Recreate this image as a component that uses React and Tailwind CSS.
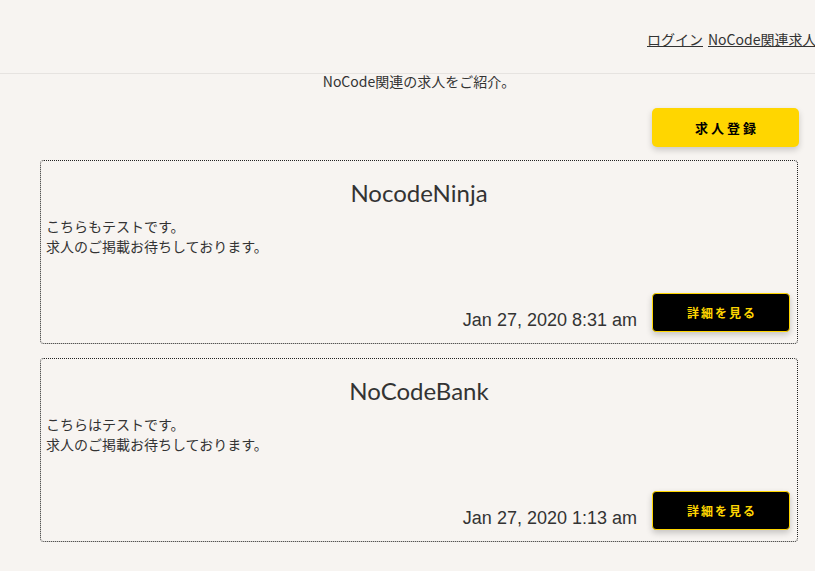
import React from "react";

const jobs = [
  {
    name: "NocodeNinja",
    lines: ["こちらもテストです。", "求人のご掲載お待ちしております。"],
    date: "Jan 27, 2020 8:31 am",
  },
  {
    name: "NoCodeBank",
    lines: ["こちらはテストです。", "求人のご掲載お待ちしております。"],
    date: "Jan 27, 2020 1:13 am",
  },
];

const jp = { fontFamily: '"Noto Sans CJK JP", "Noto Sans", sans-serif' };

function JobCard({ job }) {
  return (
    <div className="flex h-[184px] flex-col rounded-[4px] border border-dotted border-[#222]">
      <div
        className="pt-[17px] text-center text-[24px] leading-[30px] text-[#333]"
        style={{ fontFamily: "Lato, sans-serif" }}
      >
        {job.name}
      </div>
      <div className="mt-[8px] pl-[5px] text-[14px] leading-[20px] text-[#333]" style={jp}>
        {job.lines.map((l, i) => (
          <div key={i}>{l}</div>
        ))}
      </div>
      <div className="mt-auto mb-[11px] flex items-center justify-end pr-[7px]">
        <span
          className="mr-[15px] mt-[14px] text-[18px] leading-[20px] text-[#333]"
          style={{ fontFamily: '"Liberation Sans", Arial, sans-serif' }}
        >
          {job.date}
        </span>
        <button
          className="flex h-[39px] w-[138px] items-center justify-center rounded-[4px] border border-[#ffd600] bg-black pl-[2px] text-[12px] font-bold tracking-[2px] text-[#ffd600] shadow-[0_3px_6px_rgba(0,0,0,0.2)]"
          style={jp}
        >
          詳細を見る
        </button>
      </div>
    </div>
  );
}

export default function App() {
  return (
    <div className="h-[571px] w-[815px] overflow-hidden bg-[#f7f4f1]">
      <header className="h-[74px] border-b border-[#e6e3e0]">
        <nav
          className="flex gap-[5px] whitespace-nowrap pl-[647px] pt-[29px] text-[14px] leading-[20px] text-[#333]"
          style={jp}
        >
          <a className="underline" href="#">ログイン</a>
          <a className="underline" href="#">NoCode関連求人</a>
        </nav>
      </header>
      <main className="ml-[40px] w-[758px]">
        <p className="text-center text-[14px] leading-[14px] text-[#333]" style={jp}>
          NoCode関連の求人をご紹介。
        </p>
        <div className="mt-[20px] flex justify-end">
          <button
            className="-mr-[1px] flex h-[39px] w-[147px] items-center justify-center rounded-[5px] bg-[#ffd600] pl-[3px] text-[13px] font-bold tracking-[3px] text-black shadow-[0_3px_6px_rgba(0,0,0,0.18)]"
            style={jp}
          >
            求人登録
          </button>
        </div>
        <div className="mt-[13px] flex flex-col gap-[14px]">
          {jobs.map((j) => (
            <JobCard key={j.name} job={j} />
          ))}
        </div>
      </main>
    </div>
  );
}
